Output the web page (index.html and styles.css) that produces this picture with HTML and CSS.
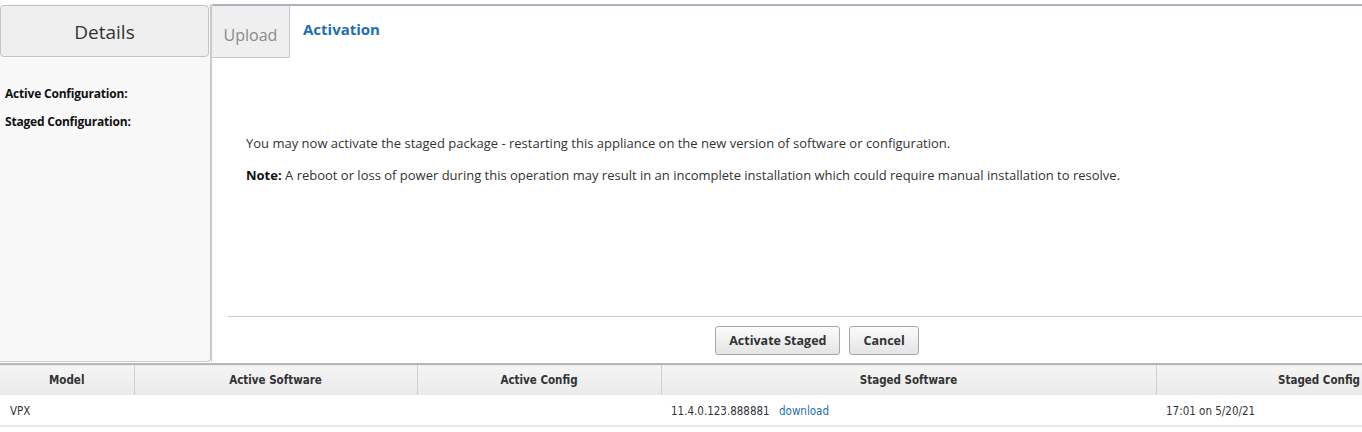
FILE: index.html
```html
<!DOCTYPE html>
<html>
<head>
<meta charset="utf-8">
<link rel="stylesheet" href="styles.css">
</head>
<body>
<div class="page">
  <div class="top">
    <aside class="left">
      <div class="details-head">Details</div>
      <div class="labels">
        <div class="label">Active Configuration:</div>
        <div class="label">Staged Configuration:</div>
      </div>
    </aside>
    <main class="right">
      <div class="tabs">
        <div class="tab tab-off">Upload</div>
        <div class="tab tab-on">Activation</div>
      </div>
      <div class="content">
        <p class="msg">You may now activate the staged package - restarting this appliance on the new version of software or configuration.</p>
        <p class="msg"><b>Note:</b> A reboot or loss of power during this operation may result in an incomplete installation which could require manual installation to resolve.</p>
      </div>
      <div class="actions">
        <button class="btn">Activate Staged</button>
        <button class="btn">Cancel</button>
      </div>
    </main>
  </div>
  <table class="grid">
    <colgroup>
      <col class="c1"><col class="c2"><col class="c3"><col class="c4"><col class="c5">
    </colgroup>
    <thead>
      <tr><th>Model</th><th>Active Software</th><th>Active Config</th><th>Staged Software</th><th>Staged Config</th></tr>
    </thead>
    <tbody>
      <tr><td>VPX</td><td></td><td></td><td>11.4.0.123.888881 <a class="link">download</a></td><td>17:01 on 5/20/21</td></tr>
    </tbody>
  </table>
</div>
</body>
</html>
```
FILE: styles.css
```css
html, body {
  margin: 0;
  padding: 0;
  background: #ffffff;
  overflow: hidden;
}
.page {
  width: 1362px;
  height: 432px;
  overflow: hidden;
  font-family: "Open Sans", "Noto Sans", sans-serif;
  color: #333;
}
.top {
  display: flex;
  margin-top: 4px;
  height: 358px;
}
.left {
  width: 211px;
  flex: none;
  background: #f8f8f8;
  border-right: 1px solid #c9c9c9;
  border-bottom: 1px solid #c9c9c9;
  border-bottom-right-radius: 4px;
  box-sizing: border-box;
}
.details-head {
  height: 52px;
  margin-top: 1px;
  margin-right: 1px;
  background: #efefef;
  border: 1px solid #c4c4c4;
  border-radius: 4px;
  box-sizing: border-box;
  display: flex;
  align-items: center;
  justify-content: center;
  padding-top: 2px;
  font-size: 19px;
  color: #333;
}
.labels {
  padding: 28px 0 0 5px;
  display: flex;
  flex-direction: column;
  gap: 11px;
}
.label {
  font-size: 12px;
  font-weight: 700;
  color: #111;
  letter-spacing: -0.2px;
}
.right {
  flex: 1;
  border-top: 2px solid #a9b3c0;
  border-left: 1px solid #c9c9c9;
  border-top-left-radius: 3px;
  display: flex;
  flex-direction: column;
}
.tabs {
  display: flex;
  height: 52px;
}
.tab-off {
  width: 78px;
  background: #efefef;
  border-right: 1px solid #c9c9c9;
  border-bottom: 1px solid #c9c9c9;
  box-sizing: border-box;
  display: flex;
  align-items: center;
  justify-content: center;
  padding-top: 6px;
  color: #8a8a8a;
  font-size: 16px;
}
.tab-on {
  padding: 13px 0 0 13px;
  color: #1c6fb4;
  font-weight: 700;
  font-size: 15px;
}
.content {
  padding: 76px 0 0 34px;
  flex: 1;
}
.msg {
  margin: 0 0 13px 0;
  font-size: 13px;
  line-height: 19px;
  color: #333;
}
.msg b {
  color: #111;
}
.actions {
  margin-left: 16px;
  border-top: 1px solid #c9c9c9;
  height: 46px;
  display: flex;
  justify-content: center;
  align-items: center;
  gap: 9px;
  padding-left: 44px;
  box-sizing: border-box;
  padding-top: 2px;
}
.btn {
  height: 29px;
  padding: 0 13px;
  font-family: inherit;
  font-size: 12.5px;
  font-weight: 700;
  color: #333;
  background: linear-gradient(#fbfbfb, #e4e4e4);
  border: 1px solid #a8a8a8;
  border-radius: 3px;
}
.grid {
  border-collapse: collapse;
  width: 1482px;
  table-layout: fixed;
  margin-top: 1px;
  font-family: "DejaVu Sans Condensed", "Liberation Sans", sans-serif;
  font-size: 11.5px;
}
.c1 { width: 134px; }
.c2 { width: 283px; }
.c3 { width: 244px; }
.c4 { width: 495px; }
.c5 { width: 326px; }
.grid thead tr {
  background: linear-gradient(#f5f5f5, #eaeaea);
  border-top: 2px solid #b4b8bd;
}
.grid th {
  height: 30px;
  font-weight: 700;
  color: #333;
  text-align: center;
  border-right: 1px solid #cfcfcf;
  padding: 0;
}
.grid td {
  height: 29px;
  padding: 1px 0 0 10px;
  color: #333;
  border-bottom: 2px solid #e8e8e8;
}
.link {
  color: #1c6fb4;
  margin-left: 6px;
}
```
